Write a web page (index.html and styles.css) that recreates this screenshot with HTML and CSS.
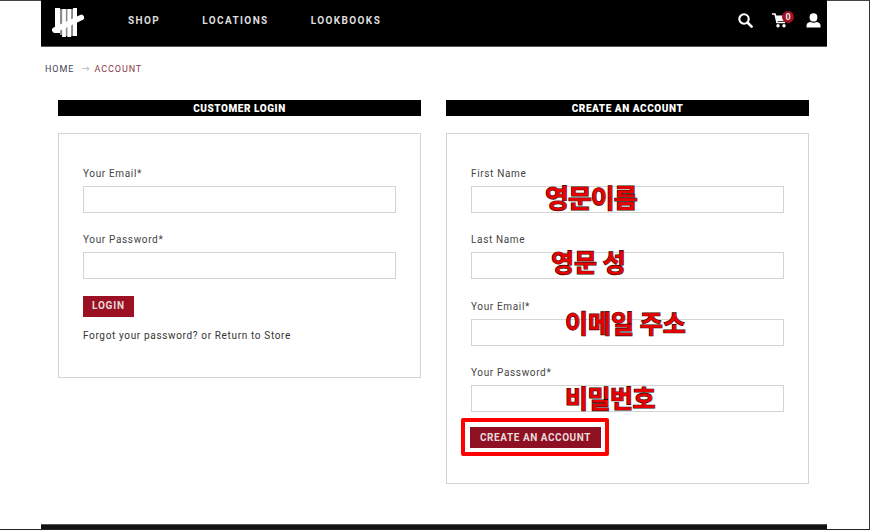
FILE: index.html
```html
<!DOCTYPE html>
<html lang="en">
<head>
  <meta charset="utf-8">
  <title>Account</title>
  <meta name="viewport" content="width=device-width,initial-scale=1">
  <link rel="stylesheet" href="styles.css">
</head>
<body>
  <div class="page">
    <!-- Top bar -->
    <header class="topbar">
      <a href="#" class="logo" aria-label="Home">
        <svg width="32" height="30" viewBox="0 0 32 30">
          <path d="M9 1v26M14.5 1v27M20 1v27" stroke="#8a8a8a" stroke-width="2.2"/>
          <g fill="none" stroke="#fff">
            <path stroke-width="5" d="M5.5 0v25"/>
            <path stroke-width="3.8" d="M12 1v28M17.2 1v28"/>
            <path stroke-width="4" d="M23 0v28"/>
            <path stroke-width="5.6" stroke-linecap="round" d="M2.8 22L29.3 9.5"/>
          </g>
        </svg>
      </a>
      <nav class="nav">
        <a href="#">SHOP</a>
        <a href="#">LOCATIONS</a>
        <a href="#">LOOKBOOKS</a>
      </nav>
      <div class="tools">
        <svg class="ico" width="15" height="15" viewBox="0 0 15 15">
          <circle cx="6" cy="6" r="4.7" fill="none" stroke="#fff" stroke-width="2.1"/>
          <path d="M9.5 9.5L13.6 13.6" stroke="#fff" stroke-width="2.6" stroke-linecap="round"/>
        </svg>
        <div class="cart">
          <svg class="ico" width="17" height="15" viewBox="0 0 17 15">
            <path d="M0 1h3l2 8.5h8" fill="none" stroke="#fff" stroke-width="1.6"/>
            <path d="M3.6 2.6H16l-1.6 5.4H5z" fill="#fff"/>
            <circle cx="6" cy="12.8" r="1.7" fill="#fff"/>
            <circle cx="12" cy="12.8" r="1.7" fill="#fff"/>
          </svg>
          <span class="badge">0</span>
        </div>
        <svg class="ico" width="15" height="15" viewBox="0 0 15 15">
          <ellipse cx="7.5" cy="4.4" rx="3.9" ry="4.2" fill="#fff"/>
          <path d="M0.5 14.6v-2.2c0-2 2-3.2 4-3.4 1.6 1 4.4 1 6 0 2 .2 4 1.4 4 3.4v2.2z" fill="#fff"/>
        </svg>
      </div>
    </header>

    <div class="crumbs">
      <a href="#">HOME</a>
      <span class="arrow">→</span>
      <span class="current">ACCOUNT</span>
    </div>

    <main class="columns">
      <section class="col">
        <h2 class="col-title">CUSTOMER LOGIN</h2>
        <form class="box box-login">
          <div class="field">
            <label>Your Email*</label>
            <input type="text">
          </div>
          <div class="field">
            <label>Your Password*</label>
            <input type="password">
          </div>
          <button type="button" class="btn">LOGIN</button>
          <p class="links">Forgot your password? or Return to Store</p>
        </form>
      </section>

      <section class="col">
        <h2 class="col-title">CREATE AN ACCOUNT</h2>
        <form class="box box-create">
          <div class="field">
            <label>First Name</label>
            <input type="text">
            <span class="note note-first">영문이름</span>
          </div>
          <div class="field">
            <label>Last Name</label>
            <input type="text">
            <span class="note note-last">영문 성</span>
          </div>
          <div class="field">
            <label>Your Email*</label>
            <input type="text">
            <span class="note note-email">이메일 주소</span>
          </div>
          <div class="field">
            <label>Your Password*</label>
            <input type="password">
            <span class="note note-pass">비밀번호</span>
          </div>
          <div class="mark">
            <button type="button" class="btn">CREATE AN ACCOUNT</button>
          </div>
        </form>
      </section>
    </main>

    <footer class="footer"></footer>
  </div>
</body>
</html>
```

FILE: styles.css
```css
/* RESET */
* { box-sizing:border-box; margin:0; padding:0; }
html, body { height:100%; overflow:hidden; background:#fff; }
body { font-family:Roboto, "Liberation Sans", sans-serif; color:#333; }
a { color:inherit; text-decoration:none; }

/* FRAME */
.page {
  height:530px; padding-left:41px;
  border-top:1px solid #444; border-right:1px solid #333; border-bottom:1px solid #222;
  display:flex; flex-direction:column;
}

/* TOP BAR */
.topbar {
  width:786px; height:47px; margin-top:-1px; background:#000;
  border-bottom:1px solid #555;
  display:flex; align-items:center; padding:0 6px 6px 11px;
}
.logo { display:flex; width:32px; margin:6px 44px 0 0; }
.nav { display:flex; gap:42px; }
.nav a {
  color:#ddd; font-size:10px; font-weight:700; letter-spacing:1.4px;
}
.tools { margin-left:auto; display:flex; align-items:center; }
.ico { display:block; }
.cart { position:relative; width:22px; margin:0 12px 0 19px; }
.badge {
  position:absolute; top:-2px; left:10px;
  width:12px; height:12px; border-radius:50%;
  background:#a01024; color:#e8e8e8;
  font-size:9px; font-weight:700; line-height:12px; text-align:center;
}

/* BREADCRUMBS */
.crumbs {
  display:flex; align-items:flex-start; gap:7px;
  padding:16px 0 0 4px; height:53px;
  font-size:9px; letter-spacing:.9px; line-height:12px;
}
.crumbs a { color:#445; }
.arrow { color:#bbb; font-family:"DejaVu Sans", sans-serif; font-size:10px; letter-spacing:0; }
.current { color:#8a3a48; margin-left:-2px; }

/* COLUMNS */
.columns { display:flex; gap:25px; padding-left:17px; align-items:flex-start; }
.col { width:363px; }
.col-title {
  background:#000; color:#fff; height:16px;
  font-size:10px; font-weight:900; letter-spacing:.55px;
  line-height:17px; text-align:center;
}
.box {
  margin-top:17px; border:1px solid #d4d4d4;
  padding:33px 24px 0 24px;
}
.box-login { height:245px; }
.box-create { height:351px; }

/* FORM */
.field { position:relative; margin-bottom:20.33px; }
.field label {
  display:block; height:19px;
  font-size:10px; letter-spacing:.65px; line-height:13px; color:#444;
}
.field input {
  display:block; width:100%; height:27px;
  border:1px solid #d4d4d4; background:#fff; outline:none;
}
.btn {
  display:block; height:21px; padding:0 9px;
  background:#9b1023; color:#e8dcdc; border:none;
  font-family:inherit; font-size:10px; font-weight:700; letter-spacing:.8px;
}
.box-login .btn { margin-top:-4px; padding-bottom:2px; }
.links {
  margin-top:12px; font-size:10px; letter-spacing:.65px; line-height:13px; color:#333;
}

/* RED NOTES OVER THE INPUTS */
.note {
  position:absolute; color:#e80000; white-space:nowrap;
  font-family:"Noto Sans CJK KR", sans-serif;
  font-size:25px; font-weight:700; line-height:30px;
  -webkit-text-stroke:1.2px #2a0a0a; paint-order:stroke fill;
}
.note-first { left:74px; top:15px; font-size:26px; letter-spacing:-1px; }
.note-last { left:80px; top:13px; }
.note-email { left:94px; top:7px; }
.note-pass { left:94px; top:16px; letter-spacing:-.5px; }

/* RED MARK ROUND THE BUTTON */
.box-create .field:nth-child(4) { margin-bottom:6px; }
.mark {
  width:148px; height:38px; margin-left:-10px;
  border:4px solid #f00; border-radius:2px; padding:5px 4px 4px 5px;
}
.mark .btn { width:100%; padding:0; background:#8f1022; letter-spacing:.55px; }

/* FOOTER */
.footer {
  margin-top:auto; width:786px; height:5px; background:#111; border-top:1px solid #555;
}
```
